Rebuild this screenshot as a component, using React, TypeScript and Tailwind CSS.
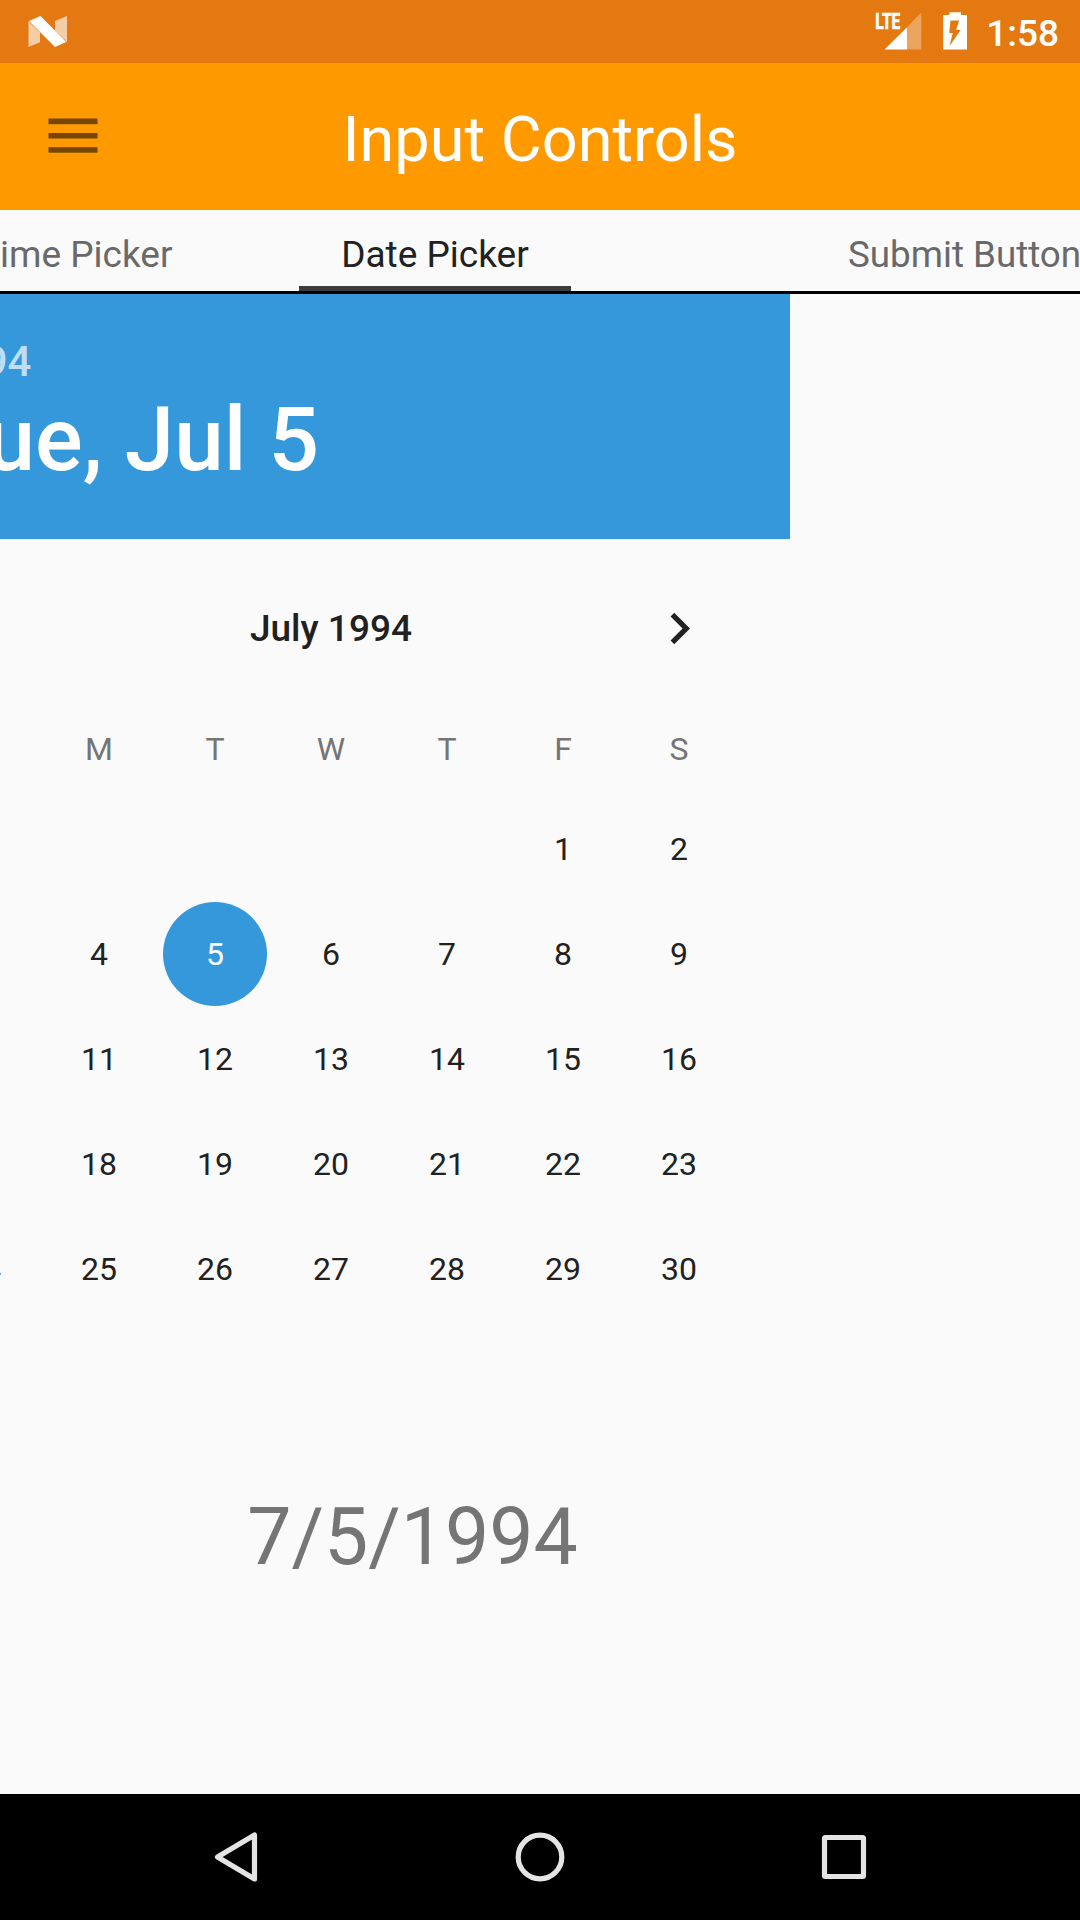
import React from "react";

const weekdays = ["S", "M", "T", "W", "T", "F", "S"];
const days: (number | null)[] = [
  ...Array<null>(5).fill(null),
  ...Array.from({ length: 30 }, (_, i) => i + 1),
];
const selectedDay = 5;

function StatusBar() {
  return (
    <div className="flex h-[63px] shrink-0 items-center justify-between bg-[#e47911] text-white">
      <svg className="ml-7" width="40" height="63" viewBox="28 0 40 63" fill="currentColor">
        <path d="M28.5 21.5 40 32.5v9.7l-11.5 4.8z" opacity=".63" />
        <path d="M55 21 67 16v26L55 30.500z" opacity=".63" />
        <path d="M29 21 40.500 16 66.300 42 55 47z" />
      </svg>
      <div className="flex h-full items-center">
        <svg width="96" height="63" viewBox="872 0 96 63" fill="currentColor">
          <text
            x="875.300"
            y="29"
            fontFamily="Roboto, sans-serif"
            fontWeight="700"
            fontSize="22"
            stroke="currentColor"
            strokeWidth=".7"
            textLength="25"
            lengthAdjust="spacingAndGlyphs"
          >
            LTE
          </text>
          <path d="M907 27.300 921.300 12.500v37H907z" opacity=".32" />
          <path d="M884.500 49.500 907 27.300v22.200z" />
          <path
            fillRule="evenodd"
            d="M949.500 12.300h11.500v2.700h6v34.500h-23.800V15h6.300zM950.500 20.500l-1.300 12.500h3.500l-3.200 13 11.200-16h-4.600l3-9.500z"
          />
        </svg>
        <span className="mr-[21px] ml-[18.5px] pt-[4px] text-[37px] leading-none font-medium">1:58</span>
      </div>
    </div>
  );
}

function AppBar() {
  return (
    <div className="grid h-[147px] shrink-0 grid-cols-[200px_1fr_200px] items-center bg-[#ff9900]">
      <svg className="ml-12" width="50" height="147" viewBox="48 63 50 147" fill="#754600">
        <rect x="48.500" y="118.500" width="49" height="5.700" />
        <rect x="48.500" y="133" width="49" height="5.500" />
        <rect x="48.500" y="147.200" width="49" height="5.500" />
      </svg>
      <h1 className="pt-[6px] text-center text-[63px] leading-none font-normal text-white">Input Controls</h1>
    </div>
  );
}

function Tabs() {
  return (
    <div className="flex h-[84px] shrink-0 border-b-[3px] border-black text-[37px] leading-none whitespace-nowrap text-[#696969]">
      <div className="flex w-[299px] shrink-0 items-center justify-end pt-[8px] pr-[126.5px]">Time Picker</div>
      <div className="flex w-[272px] shrink-0 items-center justify-center border-b-[5px] border-[#3c3c3c] pt-[13px] text-[#212121]">
        Date Picker
      </div>
      <div className="flex min-w-0 flex-1 items-center pt-[8px] pl-[277px] text-[36.75px] leading-[37px]">
        Submit Button
      </div>
    </div>
  );
}

function Calendar() {
  return (
    <div className="-ml-[128px] w-[918px] shrink-0">
      <div className="h-[245px] bg-[#3498db] pt-[46px] pl-[63px] font-medium whitespace-nowrap">
        <div className="pl-px text-[42px] leading-[44px] text-white/70">1994</div>
        <div className="pt-[11px] text-[89px] leading-[90px] text-white">Tue, Jul 5</div>
      </div>
      <div className="mt-[58px] grid h-[63px] grid-cols-[200px_1fr_200px] items-center text-[#212121]">
        <div className="col-start-2 text-center text-[37px] leading-none font-medium">July 1994</div>
        <svg className="ml-[58px]" width="63" height="63" viewBox="0 0 24 24" fill="currentColor">
          <path d="M10 6 8.590 7.410 13.170 12l-4.580 4.590L10 18l6-6z" />
        </svg>
      </div>
      <div className="mx-[53px] mt-[37px] grid grid-cols-7 text-center text-[32px]">
        {weekdays.map((d, i) => (
          <div key={i} className="h-[99.5px] leading-[105px] text-[#757575]">
            {d}
          </div>
        ))}
        {days.map((d, i) => (
          <div key={i} className="flex h-[105px] items-center justify-center">
            {d === selectedDay ? (
              <span className="flex size-[104px] items-center justify-center rounded-full bg-[#3498db] text-white">
                {d}
              </span>
            ) : (
              <span className="text-[#212121]">{d}</span>
            )}
          </div>
        ))}
      </div>
    </div>
  );
}

function NavBar() {
  return (
    <div className="flex h-[126px] shrink-0 items-center bg-black">
      <svg
        className="w-full"
        height="126"
        viewBox="0 1794 1080 126"
        fill="none"
        stroke="#e4e4e4"
        strokeWidth="5.200"
        strokeLinejoin="round"
      >
        <path d="M254.500 1835v44L217.500 1857z" />
        <circle cx="540" cy="1857" r="21.800" />
        <rect x="824.500" y="1837.500" width="39" height="39" rx="1" />
      </svg>
    </div>
  );
}

export default function App() {
  return (
    <div className="flex h-[1920px] w-[1080px] flex-col overflow-hidden bg-[#fafafa] font-[Roboto,sans-serif]">
      <StatusBar />
      <AppBar />
      <Tabs />
      <main className="flex flex-1 flex-col overflow-hidden">
        <Calendar />
        <div className="mt-[173px] w-[825px] text-center text-[78.75px] leading-[84px] text-[#757575]">7/5/1994</div>
      </main>
      <NavBar />
    </div>
  );
}
